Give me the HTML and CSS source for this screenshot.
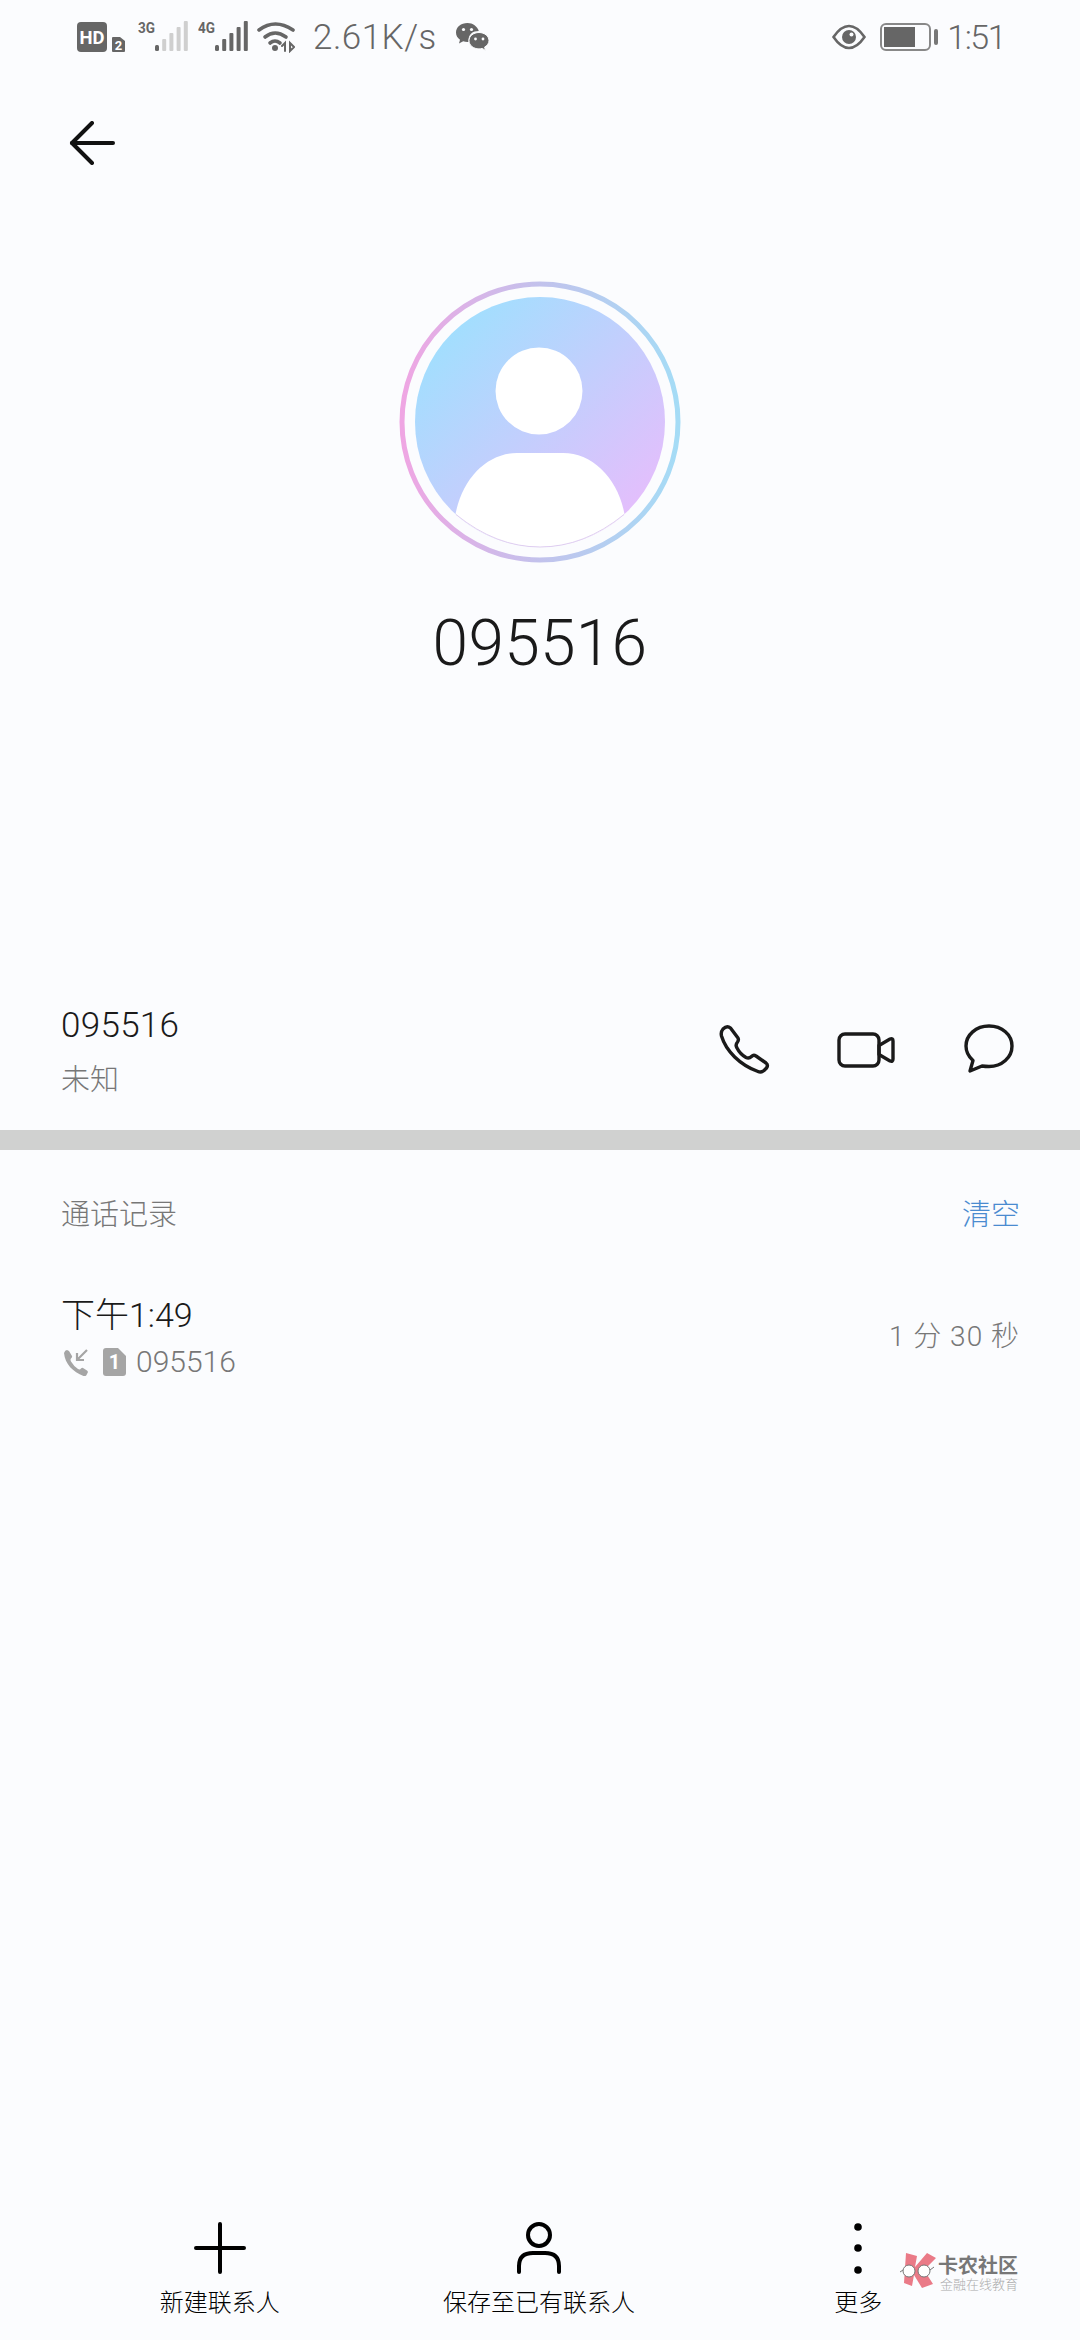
FILE: index.html
```html
<!DOCTYPE html>
<html>
<head>
<meta charset="utf-8">
<title>095516</title>
<link rel="stylesheet" href="styles.css">
</head>
<body>
<div class="page">

<div class="status">
  <div class="status-left">
    <svg class="st-hd" width="50" height="32" viewBox="0 0 50 32">
      <rect x="0" y="1" width="30" height="30" rx="4" fill="#666"/>
      <text x="15" y="23" class="st-hd-text" text-anchor="middle" textLength="25" lengthAdjust="spacingAndGlyphs">HD</text>
      <path d="M36 16h7l5 4v10q0 1-1 1H36q-1 0-1-1V17q0-1 1-1z" fill="#666"/>
      <text x="41.500" y="29" class="st-sim-text" text-anchor="middle">2</text>
    </svg>
    <svg class="st-sig" width="50" height="32" viewBox="0 0 50 32">
      <text x="0" y="12" class="st-net" textLength="17" lengthAdjust="spacingAndGlyphs">3G</text>
      <rect x="17" y="24" width="4" height="6" rx="1.500" fill="#666"/>
      <rect x="24.200" y="18" width="4" height="12" rx="1" fill="#cfcfcf"/>
      <rect x="31.400" y="12" width="4" height="18" rx="1" fill="#cfcfcf"/>
      <rect x="38.600" y="6" width="4" height="24" rx="1" fill="#cfcfcf"/>
      <rect x="45.800" y="0" width="4" height="30" rx="1" fill="#cfcfcf"/>
    </svg>
    <svg class="st-sig st-sig2" width="50" height="32" viewBox="0 0 50 32">
      <text x="0" y="12" class="st-net" textLength="17" lengthAdjust="spacingAndGlyphs">4G</text>
      <rect x="17" y="24" width="4" height="6" rx="1.500" fill="#666"/>
      <rect x="24.200" y="18" width="4" height="12" rx="1" fill="#666"/>
      <rect x="31.400" y="12" width="4" height="18" rx="1" fill="#666"/>
      <rect x="38.600" y="6" width="4" height="24" rx="1" fill="#666"/>
      <rect x="45.800" y="0" width="4" height="30" rx="1" fill="#666"/>
    </svg>
    <svg class="st-wifi" width="38" height="32" viewBox="0 0 38 32" fill="none" stroke="#666" stroke-width="3.600" stroke-linecap="round">
      <path d="M2 9Q18-3 36 9"/>
      <path d="M8 16Q18 8 29 16"/>
      <path d="M13 22Q18 18 23 22"/>
      <circle cx="18" cy="27" r="3" fill="#666" stroke="none"/>
      <path d="M28 30v-8l-3 3M33 22v8l4-4z" stroke-width="2"/>
    </svg>
    <span class="st-speed">2.61K/s</span>
    <svg class="st-wx" width="33" height="28" viewBox="0 0 33 28">
      <path d="M11.500 0C5 0 0 4 0 9.500c0 3 1.600 5.600 4 7.300L3 20.500l4.200-2.200c1.300.4 2.700.6 4.300.6l1 0C12 11 17 8 22.800 8 21.300 3.300 16.800 0 11.500 0z" fill="#666"/>
      <path d="M23 9.500c-5.500 0-10 3.600-10 8.200s4.500 8.200 10 8.200c1.100 0 2.200-.2 3.200-.5l3.300 2-.9-3.300c2.700-1.500 4.400-3.900 4.400-6.400 0-4.600-4.500-8.200-10-8.200z" fill="#666" stroke="#fbfcfe" stroke-width="1"/>
      <circle cx="7.500" cy="6.500" r="1.600" fill="#fbfcfe"/>
      <circle cx="15.500" cy="6.500" r="1.600" fill="#fbfcfe"/>
      <circle cx="19.500" cy="16" r="1.400" fill="#fbfcfe"/>
      <circle cx="27" cy="16" r="1.400" fill="#fbfcfe"/>
    </svg>
  </div>
  <div class="status-right">
    <svg class="st-eye" width="34" height="26" viewBox="0 0 34 26">
      <path d="M1.500 13Q9 2 17 2T32.500 13Q25 24 17 24T1.500 13z" fill="none" stroke="#666" stroke-width="2.600"/>
      <circle cx="17" cy="13" r="7" fill="#666"/>
      <circle cx="19.500" cy="10.500" r="2" fill="#fbfcfe"/>
    </svg>
    <div class="batt"><div class="batt-body"><div class="batt-fill"></div></div><div class="batt-nub"></div></div>
    <span class="st-time">1:51</span>
  </div>
</div>

<div class="top-bar">
  <svg class="back" width="48" height="44" viewBox="0 0 48 44" fill="none" stroke="#111" stroke-width="4" stroke-linecap="round" stroke-linejoin="round">
    <path d="M44 22H3"/>
    <path d="M23 2L3 22l20 20"/>
  </svg>
</div>

<div class="hero">
  <svg class="avatar" width="282" height="282" viewBox="0 0 282 282">
    <defs>
      <linearGradient id="ringGrad" x1="0" y1="0.500" x2="1" y2="0.500">
        <stop offset="0" stop-color="#efa6e3"/>
        <stop offset="0.500" stop-color="#c2c2ec"/>
        <stop offset="1" stop-color="#a5dcf6"/>
      </linearGradient>
      <linearGradient id="fillGrad" x1="0.150" y1="0.150" x2="0.850" y2="0.850">
        <stop offset="0" stop-color="#a3defe"/>
        <stop offset="1" stop-color="#e2bffc"/>
      </linearGradient>
      <clipPath id="innerClip"><circle cx="141" cy="141" r="125"/></clipPath>
    </defs>
    <circle cx="141" cy="141" r="138" fill="none" stroke="url(#ringGrad)" stroke-width="5"/>
    <circle cx="141" cy="141" r="125" fill="url(#fillGrad)"/>
    <circle cx="140" cy="110" r="43.500" fill="#fff"/>
    <path d="M56 236C62 198 88 172 118 172h46c30 0 56 26 62 64v60H56z" fill="#fff" clip-path="url(#innerClip)"/>
    <path d="M57 233.500Q97 266 141 266T225 233.500" fill="none" stroke="#d8c4ec" stroke-width="0.800"/>
  </svg>
  <div class="hero-name">095516</div>
</div>

<div class="number-row">
  <div class="number-info">
    <div class="number">095516</div>
    <div class="number-sub">未知</div>
  </div>
  <div class="number-actions">
    <svg width="52" height="52" viewBox="0 0 52 52" fill="none" stroke="#1a1a1a" stroke-width="3.400" stroke-linejoin="round">
      <path d="M5 5Q9 1 12.500 4L20 14Q21 16 19.500 18 17 21 19 24 22 30 28 33.500 31 35 33.500 32.500 35.500 30.500 38 32L48 39Q50.500 41 48.500 44L46 46.500Q43 49 40 47.500C22 41 8 27 3.500 12 2.500 8 5 5 5 5z"/>
    </svg>
    <svg width="58" height="36" viewBox="0 0 58 36" fill="none" stroke="#1a1a1a" stroke-width="3.400" stroke-linejoin="round">
      <rect x="2" y="2" width="40" height="32" rx="6"/>
      <path d="M42 13.500L53 7q3-1 3 2v18q0 3-3 2L42 22.500z"/>
    </svg>
    <svg width="52" height="52" viewBox="0 0 52 52" fill="none" stroke="#1a1a1a" stroke-width="3.400" stroke-linejoin="round">
      <path d="M27 2C14 2 4 11 4 22c0 6 2.500 10.500 7 14.500L8 47l12-5c2 .3 4.500.5 7 .5 13 0 23-9 23-20.500S40 2 27 2z"/>
    </svg>
  </div>
</div>

<div class="divider"></div>

<div class="log-head">
  <span class="log-title">通话记录</span>
  <span class="log-clear">清空</span>
</div>

<div class="log-item">
  <div>
    <div class="log-time">下午1:49</div>
    <div class="log-meta">
      <svg class="call-in" width="26" height="28" viewBox="0 0 26 28">
        <path d="M1 5Q2 2 4 2l2 1 3 5q.5 1-1 2.500-1 1 0 3 3 5 7 7.500 2 1 3-.5 1-1 2-.5l4 2.500q1.500 1 .5 2.500l-1 2q-1 1.500-3 1C10 24 2 16 1 5z" fill="#a5a5a5"/>
        <path d="M24 2L14 12M14 5v7h7" fill="none" stroke="#a5a5a5" stroke-width="2.200"/>
      </svg>
      <svg class="sim" width="23" height="28" viewBox="0 0 23 28">
        <path d="M3 0h12l8 8v17q0 3-3 3H3q-3 0-3-3V3q0-3 3-3z" fill="#a5a5a5"/>
        <text x="11.500" y="21" class="sim-text" text-anchor="middle">1</text>
      </svg>
      <span>095516</span>
    </div>
  </div>
  <div class="log-dur">1 分 30 秒</div>
</div>

<div class="spacer"></div>

<div class="tabs">
  <div class="tab">
    <svg width="52" height="52" viewBox="0 0 52 52" fill="none" stroke="#000" stroke-width="4" stroke-linecap="round">
      <path d="M26 2V50M2 26H50"/>
    </svg>
    <span>新建联系人</span>
  </div>
  <div class="tab">
    <svg width="52" height="52" viewBox="0 0 52 52" fill="none" stroke="#000" stroke-width="4" stroke-linecap="round">
      <circle cx="26" cy="13" r="11"/>
      <path d="M6 50V44Q6 31 20 31H32Q46 31 46 44V50"/>
    </svg>
    <span>保存至已有联系人</span>
  </div>
  <div class="tab">
    <svg width="52" height="52" viewBox="0 0 52 52" fill="#000">
      <circle cx="26" cy="5" r="3.800"/>
      <circle cx="26" cy="26" r="3.800"/>
      <circle cx="26" cy="48" r="3.800"/>
    </svg>
    <span>更多</span>
  </div>
</div>

<div class="watermark">
  <svg width="38" height="36" viewBox="0 0 38 36">
    <path d="M6 1L17 4 15 15 27 1 36 6 24 18 33 32 22 36 14 23 12 34 4 31z" fill="#ea7a87"/>
    <circle cx="9" cy="19" r="6" fill="#fff" stroke="#777" stroke-width="1"/>
    <circle cx="24" cy="19" r="6" fill="#fff" stroke="#777" stroke-width="1"/>
    <path d="M3 18L0 20M30 18l4-3" stroke="#777" fill="none"/>
  </svg>
  <div class="wm-text">
    <div class="wm-big">卡农社区</div>
    <div class="wm-small">金融在线教育</div>
  </div>
</div>

</div>
</body>
</html>
```

FILE: styles.css
```css
html, body{
	margin: 0;
	padding: 0;
}
body{
	background: #fbfcfe;
	font-family: "Roboto", "Noto Sans CJK SC", sans-serif;
	font-weight: 300;
}
.page{
	position: relative;
	width: 1080px;
	height: 2340px;
	display: flex;
	flex-direction: column;
	overflow: hidden;
}
svg{
	display: block;
	flex: none;
}

/* status bar */
.status{
	height: 74px;
	padding: 0 75px 0 77px;
	display: flex;
	justify-content: space-between;
	align-items: center;
	color: #666;
}
.status-left, .status-right{
	display: flex;
	align-items: center;
}
.st-sig{
	margin-left: 11px;
}
.st-sig2{
	margin-left: 10px;
}
.st-wifi{
	margin-left: 9px;
}
.st-speed{
	margin-left: 18px;
	font-size: 35px;
	letter-spacing: 0.5px;
}
.st-wx{
	margin-left: 19px;
}
.st-hd-text{
	font: bold 19px "Roboto", sans-serif;
	fill: #fff;
}
.st-sim-text{
	font: bold 13px "Roboto", sans-serif;
	fill: #fff;
}
.st-net{
	font: bold 14px "Roboto", sans-serif;
	fill: #666;
}
.st-eye{
	margin-right: 14px;
}
.batt{
	display: flex;
	align-items: center;
}
.batt-body{
	width: 51px;
	height: 28px;
	box-sizing: border-box;
	border: 2px solid #888;
	border-radius: 6px;
	padding: 2px;
}
.batt-fill{
	width: 31px;
	height: 100%;
	background: #666;
}
.batt-nub{
	width: 4px;
	height: 16px;
	margin-left: 3px;
	background: #777;
	border-radius: 2px;
}
.st-time{
	margin-left: 9px;
	font-size: 34px;
	letter-spacing: -1.5px;
}

/* back arrow */
.top-bar{
	height: 207px;
	padding: 47px 0 0 69px;
	box-sizing: border-box;
}

/* name and photo */
.hero{
	display: flex;
	flex-direction: column;
	align-items: center;
}
.avatar{
	margin-left: -1px;
}
.hero-name{
	margin-top: 43px;
	font-size: 64px;
	line-height: 75px;
	letter-spacing: 0.3px;
	color: #1a1a1a;
}

/* number row */
.number-row{
	margin-top: 323px;
	height: 126px;
	padding: 0 66px 0 61px;
	display: flex;
	justify-content: space-between;
	align-items: flex-start;
}
.number{
	font-size: 35px;
	line-height: 44px;
	letter-spacing: 0.3px;
	color: #1a1a1a;
}
.number-sub{
	margin-top: 11px;
	font-size: 29px;
	line-height: 42px;
	color: #777;
}
.number-actions{
	display: flex;
	align-items: center;
	gap: 67px;
	padding-top: 20px;
}

.divider{
	height: 20px;
	background: #d0d1d0;
}

/* call log */
.log-head{
	margin-top: 44px;
	padding: 0 60px 0 61px;
	display: flex;
	justify-content: space-between;
	font-size: 29px;
	line-height: 42px;
}
.log-title{
	color: #777;
}
.log-clear{
	color: #4a8bd0;
}
.log-item{
	margin-top: 57px;
	padding: 0 60px 0 61px;
	display: flex;
	justify-content: space-between;
	align-items: center;
}
.log-time{
	font-size: 34px;
	line-height: 44px;
	color: #1a1a1a;
}
.log-meta{
	margin-top: 7px;
	display: flex;
	align-items: center;
	font-size: 30px;
	line-height: 36px;
	color: #777;
}
.call-in{
	margin-left: 2px;
}
.sim{
	margin: 0 10px 0 14px;
}
.sim-text{
	font: bold 20px "Roboto", sans-serif;
	fill: #fff;
}
.log-dur{
	margin-bottom: 6px;
	font-size: 28px;
	letter-spacing: 1px;
	color: #777;
}

.spacer{
	flex: 1;
}

/* bottom actions */
.tabs{
	padding: 0 62px 20px 60px;
	display: grid;
	grid-template-columns: repeat(3, 1fr);
}
.tab{
	display: flex;
	flex-direction: column;
	align-items: center;
	font-size: 24px;
	line-height: 34px;
	color: #000;
}
.tab span{
	margin-top: 12px;
}

/* site mark in the corner */
.watermark{
	position: absolute;
	left: 900px;
	top: 2252px;
	display: flex;
	align-items: flex-start;
}
.wm-text{
	padding-top: 3px;
}
.wm-big{
	font-size: 20px;
	line-height: 22px;
	font-weight: bold;
	color: #777;
}
.wm-small{
	font-size: 13px;
	line-height: 15px;
	color: #aaa;
	margin-left: 2px;
}
```
